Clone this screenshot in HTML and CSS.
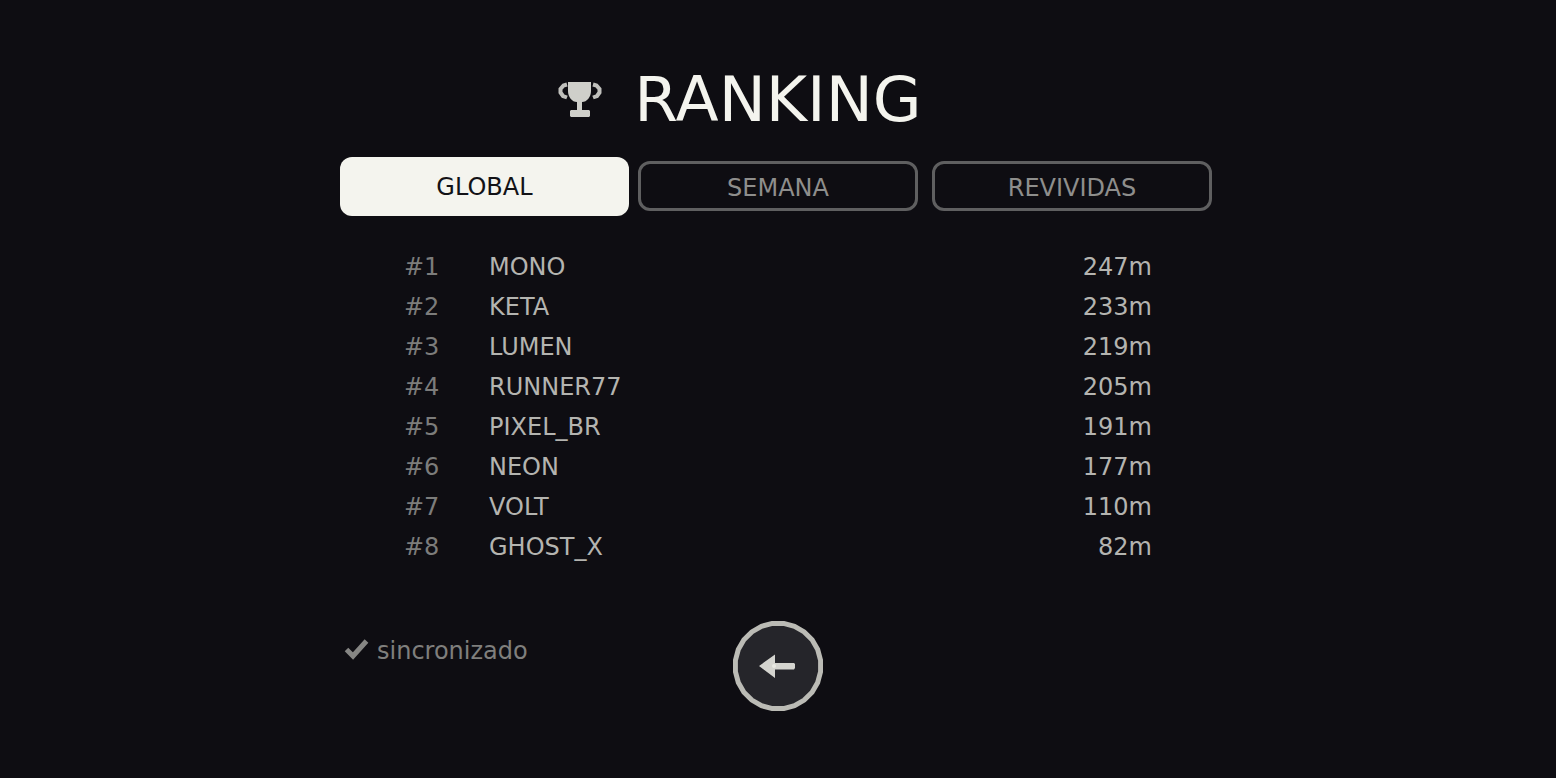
FILE: index.html
```html
<!DOCTYPE html>
<html lang="pt-BR">
<head>
    <meta charset="UTF-8">
    <meta name="viewport" content="width=device-width, initial-scale=1.0">
    <title>Ranking</title>
    <link rel="stylesheet" href="styles.css">
</head>
<body>
    <main class="ranking">
        <header class="title">
            <svg class="trophy" viewBox="0 0 44 38" aria-hidden="true">
                <path class="handle" d="M9 3.500L5.500 4.500L2.500 8V11.500L5 15L9 16.500M35 3.500L38.500 4.500L41.500 8V11.500L39 15L35 16.500"/>
                <path d="M10 1h23v9c0 6-4 11-9 11v8h7l1 1v5l-1 1H13l-1-1v-5l1-1h6v-8c-5 0-9-5-9-11z"/>
            </svg>
            <h1>RANKING</h1>
        </header>

        <nav class="tabs">
            <button type="button" class="tab active">GLOBAL</button>
            <button type="button" class="tab">SEMANA</button>
            <button type="button" class="tab">REVIVIDAS</button>
        </nav>

        <table class="scores">
            <tbody>
                <tr><td class="rank">#1</td><td>MONO</td><td class="distance">247m</td></tr>
                <tr><td class="rank">#2</td><td>KETA</td><td class="distance">233m</td></tr>
                <tr><td class="rank">#3</td><td>LUMEN</td><td class="distance">219m</td></tr>
                <tr><td class="rank">#4</td><td>RUNNER77</td><td class="distance">205m</td></tr>
                <tr><td class="rank">#5</td><td>PIXEL_BR</td><td class="distance">191m</td></tr>
                <tr><td class="rank">#6</td><td>NEON</td><td class="distance">177m</td></tr>
                <tr><td class="rank">#7</td><td>VOLT</td><td class="distance">110m</td></tr>
                <tr><td class="rank">#8</td><td>GHOST_X</td><td class="distance">82m</td></tr>
            </tbody>
        </table>

        <footer class="bottom">
            <p class="status">
                <svg class="check" viewBox="0 0 26 26" aria-hidden="true">
                    <path d="M2.500 11.500L9 18L22.500 3"/>
                </svg>
                sincronizado
            </p>
            <button type="button" class="back" aria-label="Voltar">
                <svg viewBox="0 0 90 90" aria-hidden="true">
                    <polygon class="ring" points="50.600,2.400 61.500,5.300 71.200,10.900 79.100,18.800 84.700,28.500 87.600,39.400 87.600,50.600 84.700,61.500 79.100,71.200 71.200,79.100 61.500,84.700 50.600,87.600 39.400,87.600 28.500,84.700 18.800,79.100 10.900,71.200 5.300,61.500 2.400,50.600 2.400,39.400 5.300,28.500 10.900,18.800 18.800,10.900 28.500,5.300 39.400,2.400"/>
                    <path class="arrow" d="M26 45L42 33.500V42H61L62 43V47L61 48.500H42V57Z"/>
                    <circle class="joint" cx="41" cy="45" r="2"/>
                </svg>
            </button>
        </footer>
    </main>
</body>
</html>
```
FILE: styles.css
```css
* {
    box-sizing: border-box;
}

body {
    margin: 0;
    min-height: 100vh;
    background-color: #0e0d12;
    color: #b4b4b0;
    font-family: "DejaVu Sans", sans-serif;
    font-size: 24px;
}

.ranking {
    max-width: 868px;
    margin: 0 auto;
    padding-top: 64px;
}

.title {
    display: flex;
    align-items: center;
    justify-content: center;
    gap: 32px;
    height: 72px;
    padding-right: 76px;
}

.title h1 {
    margin: 0;
    color: #f4f4ee;
    font-size: 63px;
    font-weight: normal;
    line-height: 72px;
}

.trophy {
    width: 44px;
    height: 38px;
    fill: #cfcfca;
}

.trophy .handle {
    fill: none;
    stroke: #c0c0bc;
    stroke-width: 4;
}

.tabs {
    display: grid;
    grid-template-columns: repeat(3, 1fr);
    gap: 14px;
    margin-top: 25px;
}

.tab {
    height: 50px;
    padding: 4px 0 0;
    border: 3px solid #5f5f60;
    border-radius: 12px;
    background: none;
    color: #8e8e8c;
    font: inherit;
    cursor: pointer;
}

.tab.active {
    height: 59px;
    margin: -4px -5px -5px -4px;
    padding: 0;
    border: none;
    background-color: #f4f4ee;
    color: #121216;
}

.scores {
    width: calc(100% - 120px);
    margin: 36px auto 0;
    border-collapse: collapse;
    line-height: 40px;
}

.scores td {
    padding: 0;
}

.scores .rank {
    width: 85px;
    color: #7c7c7b;
}

.scores .distance {
    text-align: right;
}

.bottom {
    display: grid;
    grid-template-columns: 1fr 90px 1fr;
    align-items: start;
    margin-top: 54px;
}

.status {
    display: flex;
    align-items: center;
    gap: 7px;
    margin: 14px 0 0;
    color: #7f7f7d;
    line-height: 32px;
}

.check {
    width: 26px;
    height: 26px;
    fill: none;
    stroke: #868684;
    stroke-width: 5;
}

.back {
    width: 90px;
    height: 90px;
    padding: 0;
    border: none;
    background: none;
    cursor: pointer;
}

.back svg {
    display: block;
}

.ring {
    fill: #25252a;
    stroke: #bbbbb5;
    stroke-width: 5;
}

.arrow {
    fill: #d4d4cf;
}

.joint {
    fill: #e8e8e2;
}
```
